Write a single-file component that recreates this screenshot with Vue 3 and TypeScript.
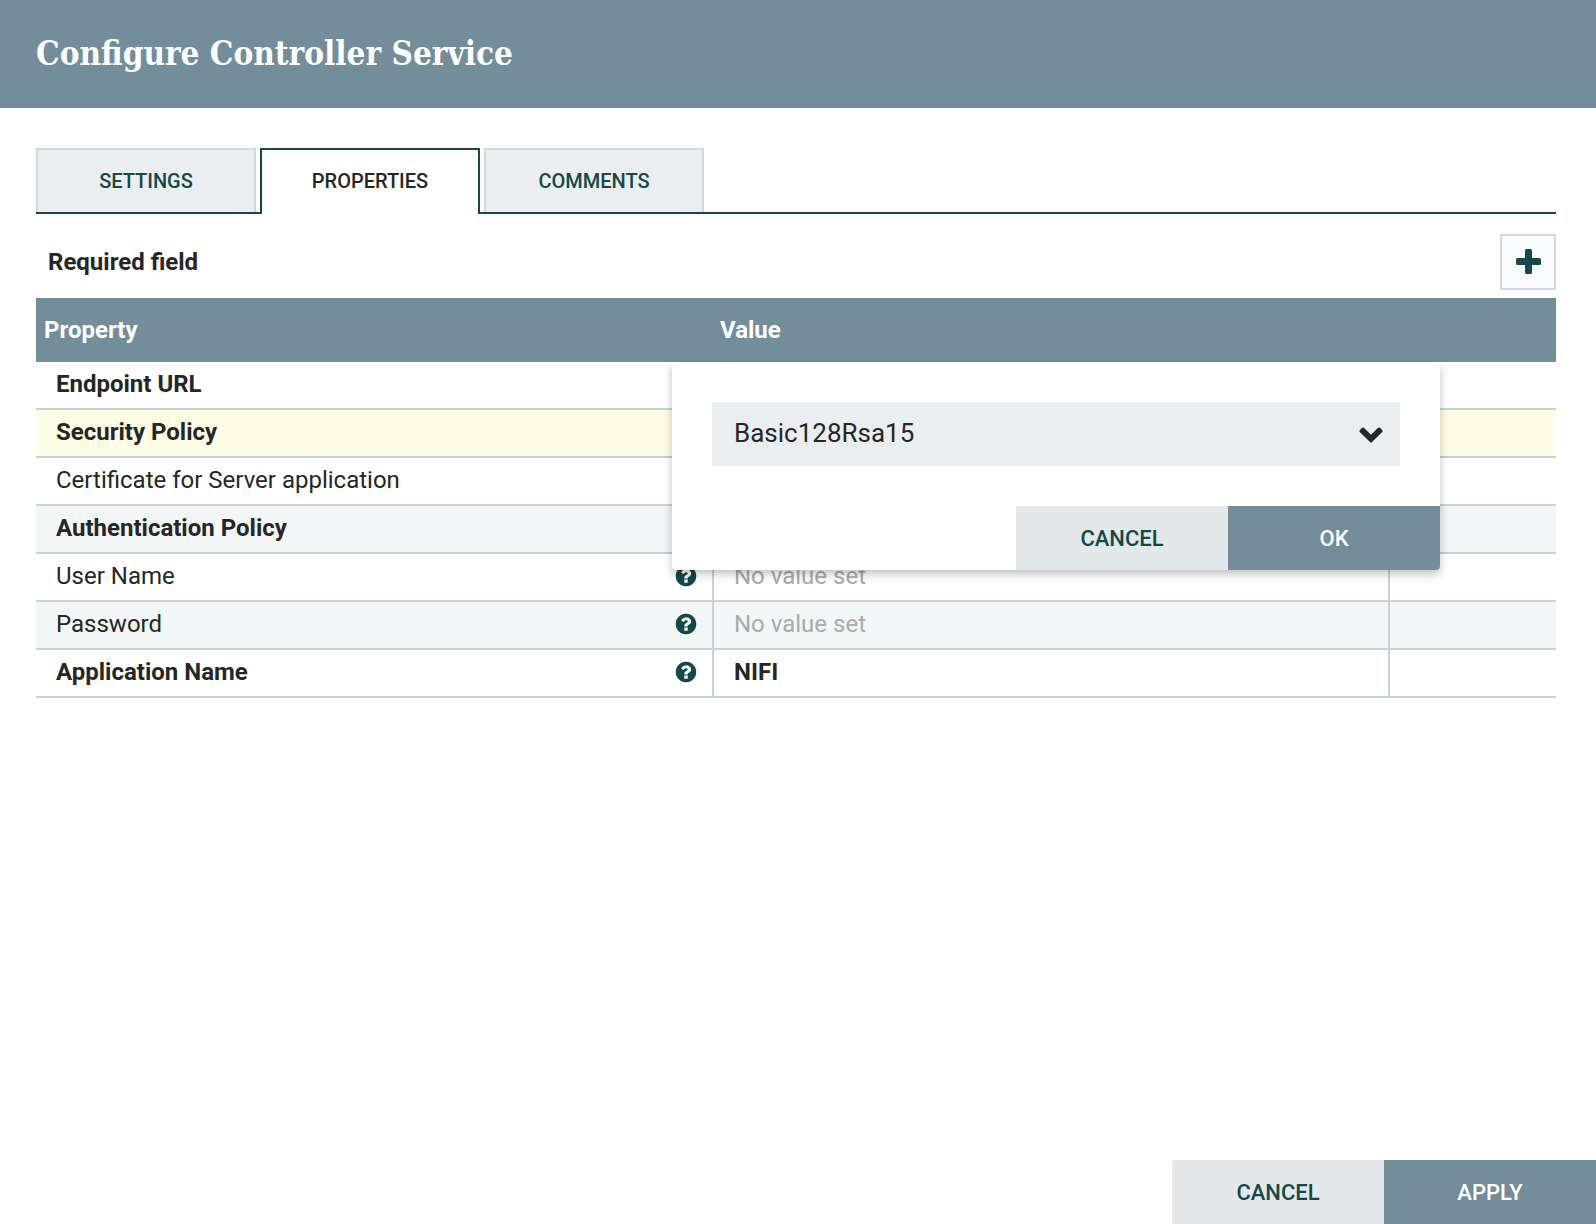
<script setup lang="ts">
import { ref } from 'vue'

interface Property {
  name: string
  required: boolean
  value: string | null
}

const tabs = ['Settings', 'Properties', 'Comments']
const activeTab = ref('Properties')
const selectedRow = ref('Security Policy')
const policy = ref('Basic128Rsa15')
const policies = ['None', 'Basic128Rsa15', 'Basic256', 'Basic256Sha256']

const properties: Property[] = [
  { name: 'Endpoint URL', required: true, value: '' },
  { name: 'Security Policy', required: true, value: '' },
  { name: 'Certificate for Server application', required: false, value: '' },
  { name: 'Authentication Policy', required: true, value: '' },
  { name: 'User Name', required: false, value: null },
  { name: 'Password', required: false, value: null },
  { name: 'Application Name', required: true, value: 'NIFI' },
]
</script>

<template>
  <div class="dialog">
    <header class="dialog-header">
      <h1>Configure Controller Service</h1>
    </header>

    <main class="content">
      <nav class="tabs" role="tablist">
        <button
          v-for="tab in tabs"
          :key="tab"
          type="button"
          role="tab"
          class="tab"
          :class="{ active: tab === activeTab }"
          :aria-selected="tab === activeTab"
          @click="activeTab = tab"
        >
          {{ tab.toUpperCase() }}
        </button>
      </nav>

      <div class="toolbar">
        <span>Required field</span>
        <button type="button" class="add" aria-label="Add property">
          <svg width="26" height="26" viewBox="0 0 26 26" aria-hidden="true">
            <rect x="10" y="0" width="7" height="25" rx="1.6" />
            <rect x="1" y="9" width="25" height="7" rx="1.6" />
          </svg>
        </button>
      </div>

      <div class="grid">
        <table>
          <colgroup>
            <col class="col-property" />
            <col />
            <col class="col-actions" />
          </colgroup>
          <thead>
            <tr>
              <th scope="col">Property</th>
              <th scope="col">Value</th>
              <th></th>
            </tr>
          </thead>
          <tbody>
            <tr
              v-for="property in properties"
              :key="property.name"
              :class="{ required: property.required, selected: property.name === selectedRow }"
            >
              <td>
                <div class="name">
                  <span>{{ property.name }}</span>
                  <svg width="24" height="24" viewBox="0 0 1792 1792" aria-hidden="true">
                    <path
                      d="M1024 1376v-192q0-14-9-23t-23-9h-192q-14 0-23 9t-9 23v192q0 14 9 23t23 9h192q14 0 23-9t9-23zm256-672q0-88-55.5-163t-138.5-116-170-41q-243 0-371 213-15 24 8 42l132 100q7 6 19 6 16 0 25-12 53-68 86-92 34-24 86-24 48 0 85.5 26t37.5 59q0 38-20 61t-68 45q-63 28-115.5 86.5t-52.5 125.5v36q0 14 9 23t23 9h192q14 0 23-9t9-23q0-19 21.5-49.5t54.5-49.5q32-18 49-28.5t46-35 44.5-48 28-60.5 12.5-81zm384 192q0 209-103 385.5t-279.5 279.5-385.5 103-385.5-103-279.5-279.5-103-385.5 103-385.5 279.5-279.5 385.5-103 385.5 103 279.5 279.5 103 385.5z"
                    />
                  </svg>
                </div>
              </td>
              <td>
                <span v-if="property.value === null" class="unset">No value set</span>
                <template v-else>{{ property.value }}</template>
              </td>
              <td></td>
            </tr>
          </tbody>
        </table>

        <form class="editor" @submit.prevent>
          <div class="combo">
            <select v-model="policy" aria-label="Security Policy">
              <option v-for="option in policies" :key="option">{{ option }}</option>
            </select>
            <svg width="24" height="16" viewBox="0 0 24 16" aria-hidden="true">
              <path
                d="M3.1.8Q4 0 4.9.8L12 7.8 19.1.8Q20 0 20.9.8L23.3 3.2Q24 4 23.3 4.9L12.7 15.3Q12 16 11.3 15.3L.7 4.9Q0 4 .7 3.2Z"
              />
            </svg>
          </div>
          <div class="actions">
            <button type="button" class="button secondary">CANCEL</button>
            <button type="submit" class="button primary">OK</button>
          </div>
        </form>
      </div>
    </main>

    <footer class="actions">
      <button type="button" class="button secondary">CANCEL</button>
      <button type="button" class="button primary">APPLY</button>
    </footer>
  </div>
</template>

<style>
body {
  margin: 0;
}
</style>

<style scoped>
.dialog,
.dialog * {
  box-sizing: border-box;
}

.dialog {
  display: flex;
  flex-direction: column;
  min-height: 100vh;
  background: #fff;
  color: #262626;
  font-family: Roboto, 'Liberation Sans', sans-serif;
  font-size: 24px;
}

button,
select {
  margin: 0;
  padding: 0;
  border: 0;
  border-radius: 0;
  font-family: inherit;
}

.dialog-header {
  height: 108px;
  padding: 0 36px;
  background: #748d9a;
}

h1 {
  margin: 0;
  color: #fff;
  font-family: 'Roboto Slab', 'DejaVu Serif Condensed', 'DejaVu Serif', serif;
  font-size: 33px;
  font-weight: 700;
  line-height: 108px;
}

.content {
  padding: 40px 40px 0 36px;
}

.tabs {
  display: flex;
  gap: 4px;
  height: 66px;
  border-bottom: 2px solid #154848;
}

.tab {
  width: 220px;
  height: 64px;
  border: 2px solid #ccdadb;
  border-bottom: 0;
  background: #eaeef1;
  color: #154848;
  font-size: 20px;
  font-weight: 500;
}

.tab.active {
  height: 66px;
  padding-bottom: 2px;
  border-color: #154848;
  border-radius: 0 0 2px 2px;
  background: #fff;
  color: #262626;
}

.toolbar {
  display: flex;
  align-items: center;
  justify-content: space-between;
  padding: 20px 0 8px 12px;
  font-weight: 700;
}

.add {
  display: flex;
  align-items: center;
  justify-content: center;
  width: 56px;
  height: 56px;
  border: 2px solid #ccdadb;
  background: #f9fbfc;
  fill: #154848;
}

.grid {
  position: relative;
}

table {
  width: 100%;
  border-collapse: separate;
  border-spacing: 0;
  table-layout: fixed;
}

.col-property {
  width: 678px;
}

.col-actions {
  width: 166px;
}

th {
  height: 64px;
  padding: 0 8px;
  background: #748d9a;
  color: #fff;
  font-weight: 700;
  text-align: left;
}

th + th {
  padding-left: 6px;
}

td {
  height: 48px;
  padding: 0 20px 2px;
  border-right: 2px solid #c7d2d7;
  border-bottom: 2px solid #c7d2d7;
  line-height: 44px;
}

td:first-child {
  padding-right: 14px;
}

td:last-child {
  border-right: 0;
}

tbody tr:nth-child(even) {
  background: #f3f6f7;
}

tbody tr.selected {
  background: #fffce5;
}

.required {
  font-weight: 700;
}

.name {
  display: flex;
  align-items: center;
  justify-content: space-between;
}

.name svg {
  fill: #154848;
}

.unset {
  color: #aaa;
}

.editor {
  position: absolute;
  top: 64px;
  right: 116px;
  left: 636px;
  overflow: hidden;
  border-radius: 4px;
  background: #fff;
  box-shadow: 0 4px 10px rgba(0, 0, 0, 0.25);
}

.combo {
  position: relative;
  margin: 40px;
}

.combo select {
  display: block;
  width: 100%;
  height: 64px;
  padding: 0 60px 2px 22px;
  appearance: none;
  background: #eaeef1;
  color: #262626;
  font-size: 26px;
}

.combo svg {
  position: absolute;
  top: 25px;
  right: 17px;
  fill: #262626;
  pointer-events: none;
}

.actions {
  display: flex;
  justify-content: flex-end;
}

footer {
  margin-top: auto;
}

.button {
  width: 212px;
  height: 64px;
  font-size: 22px;
  font-weight: 500;
}

.secondary {
  background: #e3e8ea;
  color: #154848;
}

.primary {
  background: #748d9a;
  color: #fff;
}
</style>
